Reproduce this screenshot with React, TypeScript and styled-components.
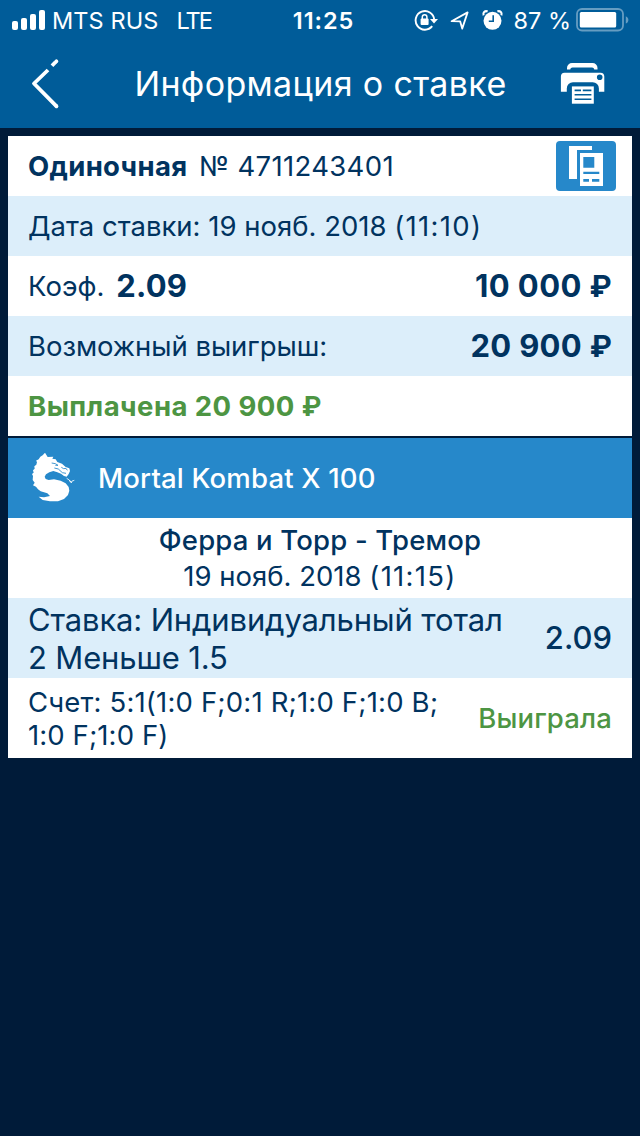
import React from 'react';
import styled, { createGlobalStyle } from 'styled-components';

const GlobalStyle = createGlobalStyle`
  * { box-sizing: border-box; }
  body { margin: 0; background: #001b39; }
`;

const Screen = styled.div`
  width: 640px;
  height: 1136px;
  overflow: hidden;
  background: #001b39;
  color: #01335f;
  font-family: Inter, 'Noto Sans', sans-serif;
`;

const Text = styled.span<{ $size?: number; $weight?: number; $spacing?: number; $color?: string }>`
  font-size: ${(p) => p.$size ?? 27.5}px;
  font-weight: ${(p) => p.$weight ?? 400};
  letter-spacing: ${(p) => p.$spacing ?? 0}px;
  color: ${(p) => p.$color ?? 'inherit'};
  white-space: nowrap;
`;

const Time = styled.span`
  letter-spacing: 1.3px;
`;

const Ruble = styled.span`
  font-size: 0.96em;
  font-weight: 700;
`;

const Header = styled.header`
  height: 128px;
  background: #005c99;
  color: #fff;
`;

const StatusBar = styled.div`
  display: grid;
  grid-template-columns: 1fr auto 1fr;
  align-items: center;
  height: 40px;
  padding: 0 11px 0 12px;
`;

const StatusGroup = styled.div<{ $end?: boolean }>`
  display: flex;
  align-items: center;
  justify-content: ${(p) => (p.$end ? 'flex-end' : 'flex-start')};
`;

const Carrier = styled(Text)`
  margin-left: 7px;
`;

const Network = styled(Text)`
  margin-left: 18px;
`;

const Clock = styled(Text)`
  margin-left: 6px;
`;

const Percent = styled(Text)`
  margin: 0 5px 0 9px;
`;

const NavBar = styled.div`
  display: grid;
  grid-template-columns: 1fr auto 1fr;
  align-items: center;
  height: 88px;
  padding: 0 34px 0 30px;
`;

const NavTitle = styled(Text)`
  margin: 0 0 2px 5px;
`;

const Icon = styled.svg`
  display: block;
  flex: none;
`;

const NavAction = styled.div`
  justify-self: end;
`;

const Ticket = styled.main`
  margin: 8px 8px 0;
`;

const Row = styled.div<{ $tint?: boolean; $tall?: boolean }>`
  display: flex;
  align-items: center;
  justify-content: space-between;
  height: ${(p) => (p.$tall ? 80 : 60)}px;
  padding: 0 20px;
  background: ${(p) => (p.$tint ? '#dceefa' : '#fff')};
`;

const Pair = styled.div<{ $gap: number }>`
  display: flex;
  align-items: center;
  gap: ${(p) => p.$gap}px;
`;

const Amount = styled(Text)`
  padding-bottom: 1px;
`;

const CopyButton = styled.button`
  display: flex;
  align-items: center;
  justify-content: center;
  width: 60px;
  height: 50px;
  margin-right: -4px;
  padding: 0;
  border: 0;
  border-radius: 4px;
  background: #2688ca;
`;

const GameHeader = styled.div`
  display: flex;
  align-items: center;
  height: 80px;
  margin-top: 2px;
  padding-left: 20px;
  gap: 18px;
  background: #2688ca;
  color: #fff;
`;

const Match = styled.div`
  display: flex;
  flex-direction: column;
  align-items: center;
  height: 80px;
  padding-top: 4px;
  line-height: 36px;
  background: #fff;
`;

const Lines = styled.div<{ $height: number }>`
  display: flex;
  flex-direction: column;
  padding-top: 2px;
  line-height: ${(p) => p.$height}px;
`;

const GREEN = '#4d9543';

const SignalIcon = () => (
  <Icon width="33" height="20" viewBox="0 0 33 20" fill="#fff">
    <rect x="0" y="11" width="6" height="9" rx="2" />
    <rect x="9" y="8" width="6" height="12" rx="2" />
    <rect x="18" y="4" width="6" height="16" rx="2" />
    <rect x="27" y="0" width="6" height="20" rx="2" />
  </Icon>
);

const StatusIcons = () => (
  <Icon width="90" height="24" viewBox="0 0 90 24" fill="none" stroke="#fff">
    <path d="M18.2 18.2A9.3 9.3 0 1 1 20.2 11.5" strokeWidth="1.9" />
    <path d="M16 11h8l-4 4.6z" fill="#fff" stroke="none" />
    <path d="M8.3 11V9a2.3 2.3 0 0 1 4.6 0v2" strokeWidth="1.5" />
    <rect x="6.6" y="10.6" width="8" height="6.4" rx="1" fill="#fff" stroke="none" />
    <path d="M37.6 13.2L53.6 4.4L48.2 20.6L46.2 13.4Z" strokeWidth="1.8" strokeLinejoin="round" />
    <circle cx="78.5" cy="12.8" r="9" fill="#fff" stroke="none" />
    <path d="M69.6 7.4a3 3 0 0 1 4-4M87.4 7.4a3 3 0 0 0-4-4" strokeWidth="2.2" />
    <path d="M79.2 7.3v6h-4.4" stroke="#005c99" strokeWidth="1.6" />
  </Icon>
);

const BatteryIcon = () => (
  <Icon width="53" height="24" viewBox="0 0 53 24">
    <rect x="1" y="1" width="46" height="21.5" rx="5" fill="none" stroke="#669dc2" strokeWidth="1.8" />
    <rect x="3.8" y="4" width="36.4" height="15.4" rx="1.5" fill="#fff" />
    <path d="M49.8 8.2c3.4 1.4 3.4 6 0 7.4z" fill="#669dc2" />
  </Icon>
);

const BackIcon = () => (
  <Icon width="30" height="52" viewBox="0 0 30 52" fill="none" stroke="#fff" strokeWidth="3.8">
    <path d="M18 12L4 25.5L26.6 48.4" strokeLinejoin="round" />
    <path d="M26.4 48.2l.1.1" strokeLinecap="round" />
    <path d="M22 7.8L25.6 4" />
    <path d="M26.3 3.4l.1-.1" strokeLinecap="round" />
  </Icon>
);

const PrinterIcon = () => (
  <Icon width="46" height="44" viewBox="0 0 46 44" fill="#fff">
    <path d="M7 7.6V6a5 5 0 0 1 5-5h20.5a5 5 0 0 1 5 5v1.6h-3.2q-.4-2-2.2-2H12.5q-2 0-2.3 2z" />
    <path
      fillRule="evenodd"
      d="M4.5 10.7h36a3.8 3.8 0 0 1 3.8 3.8v15.2h-5.4v-3.2a6.2 6.2 0 0 0-6.2-6.2H13a6.2 6.2 0 0 0-6.2 6.2v3.2H.9V14.5a3.8 3.8 0 0 1 3.6-3.8zM39.7 12.4a2.8 2.8 0 1 0 0 5.6a2.8 2.8 0 0 0 0-5.6z"
    />
    <path d="M11.9 24.4h21.9v17.3H11.9z" />
    <path d="M14.6 28.4h6.4M22.8 28.4h8.6M14.6 32.8h16.8M14.6 37.2h16.8" stroke="#005c99" strokeWidth="1.6" />
  </Icon>
);

const CouponIcon = () => (
  <Icon width="36" height="42" viewBox="0 0 36 42" fill="#fff">
    <path d="M1 1h23v4H9v29H1z" />
    <path fillRule="evenodd" d="M12 8h23v33H12zM15.3 12v10.7h11V12zM15.3 26.7V29h16v-2.3zM15.3 34v2.7H21V34zM24 34v2.7h7.3V34z" />
  </Icon>
);

const DragonIcon = () => (
  <Icon width="52" height="60" viewBox="0 0 156 180" fill="#fff">
    <path d="M51 14L59 27L76 26L73 32L83 34L88 42L102 47L113 57L124 61L126 69L122 78L116 86L108 84L99 77L88 73L76 69L64 73L54 79L50 86L53 93L62 96L78 94L98 98L113 106L122 117L124 128L120 141L108 153L90 160L66 160L44 156L32 146L48 148L66 144L58 136L38 130L30 124L24 116L15 112L20 104L14 96L15 84L12 78L17 74L15 67L20 62L19 55L25 50L27 42L24 38L32 34L37 26L44 22Z" />
    <path d="M71 45l11 2l8 5l-8 0M79 60l12 3l12 11l11 2M100 58l7 4l7-1l4 6" fill="none" stroke="#2688ca" strokeWidth="2.6" />
    <path d="M116 91l8 5l6 8l2-5l7-2M124 96l3 6l5 1" fill="none" stroke="#fff" strokeWidth="2.4" />
  </Icon>
);

export default function App() {
  return (
    <Screen>
      <GlobalStyle />
      <Header>
        <StatusBar>
          <StatusGroup>
            <SignalIcon />
            <Carrier $size={23.5} $spacing={0.1}>MTS RUS</Carrier>
            <Network $size={23.5} $spacing={-2}>LTE</Network>
          </StatusGroup>
          <Clock $size={23.5} $weight={600} $spacing={0.9}>11:25</Clock>
          <StatusGroup $end>
            <StatusIcons />
            <Percent $size={23.5}>87 %</Percent>
            <BatteryIcon />
          </StatusGroup>
        </StatusBar>
        <NavBar>
          <BackIcon />
          <NavTitle $size={34} $spacing={0.35}>Информация о ставке</NavTitle>
          <NavAction>
            <PrinterIcon />
          </NavAction>
        </NavBar>
      </Header>
      <Ticket>
        <Row>
          <Pair $gap={11.5}>
            <Text $weight={700} $spacing={0.33}>Одиночная</Text>
            <Text $spacing={0.35}>№ 4711243401</Text>
          </Pair>
          <CopyButton aria-label="Купон">
            <CouponIcon />
          </CopyButton>
        </Row>
        <Row $tint>
          <Text>
            Дата ставки: 19 нояб. 2018 <Time>(11:10)</Time>
          </Text>
        </Row>
        <Row>
          <Pair $gap={12}>
            <Text>Коэф.</Text>
            <Amount $size={31} $weight={700} $spacing={0.2}>2.09</Amount>
          </Pair>
          <Amount $size={31} $weight={700} $spacing={0.4}>
            10 000 <Ruble>₽</Ruble>
          </Amount>
        </Row>
        <Row $tint>
          <Text $spacing={-0.05}>Возможный выигрыш:</Text>
          <Amount $size={31} $weight={700} $spacing={0.3}>
            20 900 <Ruble>₽</Ruble>
          </Amount>
        </Row>
        <Row>
          <Text $weight={700} $spacing={0.45} $color={GREEN}>
            Выплачена 20 900 <Ruble>₽</Ruble>
          </Text>
        </Row>
        <GameHeader>
          <DragonIcon />
          <Text $weight={500} $spacing={0.19}>Mortal Kombat X 100</Text>
        </GameHeader>
        <Match>
          <Text $weight={500} $spacing={0.18}>Ферра и Торр - Тремор</Text>
          <Text>
            19 нояб. 2018 <Time>(11:15)</Time>
          </Text>
        </Match>
        <Row $tint $tall>
          <Lines $height={38}>
            <Text $size={31} $spacing={-0.15}>Ставка: Индивидуальный тотал</Text>
            <Text $size={31} $spacing={-0.15}>2 Меньше 1.5</Text>
          </Lines>
          <Amount $size={31} $weight={500}>2.09</Amount>
        </Row>
        <Row $tall>
          <Lines $height={33}>
            <Text $spacing={0.17}>Счет: 5:1(1:0 F;0:1 R;1:0 F;1:0 B;</Text>
            <Text $spacing={0.1}>1:0 F;1:0 F)</Text>
          </Lines>
          <Text $weight={500} $spacing={0.15} $color={GREEN}>Выиграла</Text>
        </Row>
      </Ticket>
    </Screen>
  );
}
